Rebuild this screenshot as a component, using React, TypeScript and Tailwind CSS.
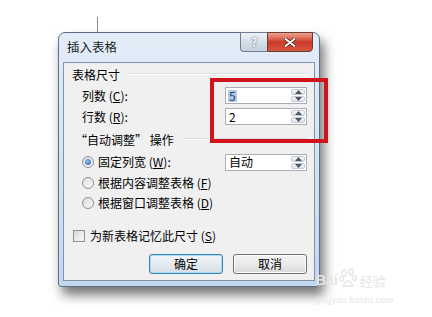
import React from "react";

const Spin = ({ value, sel }: { value: string; sel?: boolean }) => (
  <div className="w-[82px] h-[17px] border border-[#a9aeb6] bg-white flex items-stretch">
    <div className="flex-1 flex items-center pl-[2px] text-[12px] leading-none text-black">
      <span className={sel ? "bg-[#b3cde9] px-[1px] text-[#1b3f6a]" : "px-[1px]"}>{value}</span>
    </div>
    <div className="w-[15px] flex flex-col py-[1px] pr-[1px] gap-px">
      <div className="flex-1 border border-[#c5cbd3] bg-gradient-to-b from-[#f6f7f9] to-[#dfe3e8] rounded-[2px] flex items-center justify-center">
        <svg width="7" height="4" viewBox="0 0 7 4"><path d="M0 4 L3.5 0 L7 4 Z" fill="#4a5868" /></svg>
      </div>
      <div className="flex-1 border border-[#c5cbd3] bg-gradient-to-b from-[#f6f7f9] to-[#dfe3e8] rounded-[2px] flex items-center justify-center">
        <svg width="7" height="4" viewBox="0 0 7 4"><path d="M0 0 L3.5 4 L7 0 Z" fill="#4a5868" /></svg>
      </div>
    </div>
  </div>
);

const Radio = ({ on }: { on?: boolean }) => (
  <div className="w-[12px] h-[12px] rounded-full border border-[#8e9194] bg-gradient-to-br from-[#dcdcdc] to-[#fbfbfb] flex items-center justify-center shrink-0">
    {on && <div className="w-[6px] h-[6px] rounded-full bg-[radial-gradient(circle_at_40%_35%,#8cc0ef,#1d5fa5)]" />}
  </div>
);

const U = ({ c }: { c: string }) => (
  <span>
    (<span className="underline">{c}</span>)
  </span>
);

export default function App() {
  return (
    <div className="relative w-[432px] h-[317px] bg-white overflow-hidden font-['Noto_Sans_CJK_SC','Noto_Sans',sans-serif] text-black">
      {/* vertical guide line */}
      <div className="absolute left-[97px] top-[17px] w-px h-[16px] bg-[#8a8a8a]" />

      {/* dialog window */}
      <div className="absolute left-[58px] top-[32px] w-[262px] h-[255px] border border-[#5d6f86] rounded-t-[7px] rounded-b-[3px] bg-gradient-to-b from-[#e3edf8] via-[#d3e3f3] to-[#c3d8ee] shadow-[4px_8px_12px_rgba(0,0,0,0.55)] flex flex-col">
        {/* title bar */}
        <div className="h-[29px] flex items-start">
          <div className="self-center pl-[8px] text-[12.5px] leading-none text-[#1e1e1e]">插入表格</div>
          <div className="ml-auto mr-[6px] -mt-px flex h-[20px]">
            <div className="w-[27px] h-full border border-[#6e7f93] border-r-0 rounded-bl-[4px] bg-gradient-to-b from-[#eef2f7] via-[#d6e0ea] to-[#c3d0de] flex items-center justify-center text-[12px] font-bold text-[#f6f8fb] [text-shadow:0_0_2px_#3e4b5a]">
              ?
            </div>
            <div className="w-[46px] h-full border border-[#6b3b36] rounded-br-[4px] bg-gradient-to-b from-[#eba292] via-[#cc3a28] to-[#d9553d] flex items-center justify-center">
              <svg width="12" height="9" viewBox="0 0 12 9">
                <path d="M1.5 1 L10.5 8 M10.5 1 L1.5 8" stroke="#3d1a16" strokeWidth="3.2" strokeLinecap="round" />
                <path d="M1.5 1 L10.5 8 M10.5 1 L1.5 8" stroke="#ffffff" strokeWidth="2" strokeLinecap="round" />
              </svg>
            </div>
          </div>
        </div>

        {/* client area */}
        <div className="mx-[4px] mb-[5px] flex-1 border border-[#7f93ab] bg-[#f0f0f0] flex flex-col text-[12px] leading-none pr-[7px]">
          {/* 表格尺寸 */}
          <div className="mt-[4px] h-[16px] flex items-center pl-[8px]">
            <span>表格尺寸</span>
            <div className="flex-1 ml-[6px] mt-[-2px] h-[2px] border-t border-[#d5dfe5] border-b border-b-white" />
          </div>
          <div className="mt-[4px] h-[17px] flex items-center pl-[18px]">
            <span className="w-[143px]">列数 <U c="C" />:</span>
            <Spin value="5" sel />
          </div>
          <div className="mt-[4px] h-[17px] flex items-center pl-[18px]">
            <span className="w-[143px]">行数 <U c="R" />:</span>
            <Spin value="2" />
          </div>
          {/* 自动调整 */}
          <div className="mt-[7px] h-[16px] flex items-center pl-[11px]">
            <span>“自动调整” 操作</span>
            <div className="flex-1 ml-[8px] mt-[-2px] h-[2px] border-t border-[#d5dfe5] border-b border-b-white" />
          </div>
          <div className="mt-[6px] h-[16px] flex items-center pl-[18px]">
            <Radio on />
            <span className="ml-[4px] w-[127px]">固定列宽 <U c="W" />:</span>
            <Spin value="自动" />
          </div>
          <div className="mt-[5px] h-[16px] flex items-center pl-[18px]">
            <Radio />
            <span className="ml-[4px]">根据内容调整表格 <U c="F" /></span>
          </div>
          <div className="mt-[4px] h-[16px] flex items-center pl-[18px]">
            <Radio />
            <span className="ml-[4px]">根据窗口调整表格 <U c="D" /></span>
          </div>
          {/* checkbox */}
          <div className="mt-[17px] h-[16px] flex items-center pl-[9px]">
            <div className="w-[12px] h-[12px] border border-[#8e9194] bg-gradient-to-br from-[#d9d9d9] to-[#fafafa] shrink-0" />
            <span className="ml-[5px]">为新表格记忆此尺寸 <U c="S" /></span>
          </div>
          {/* buttons */}
          <div className="mt-[10px] h-[20px] flex justify-end gap-[10px]">
            <div className="w-[74px] h-full rounded-[3px] border border-[#3c7fb1] shadow-[inset_0_0_0_1px_#a8dcf5] bg-gradient-to-b from-[#f1f5f8] via-[#e6ecf1] to-[#d6dfe6] flex items-center justify-center">
              确定
            </div>
            <div className="w-[74px] h-full rounded-[3px] border border-[#707070] shadow-[inset_0_0_0_1px_#fbfbfb] bg-gradient-to-b from-[#f3f3f3] via-[#ebebeb] to-[#d8d8d8] flex items-center justify-center">
              取消
            </div>
          </div>
        </div>
      </div>

      {/* red annotation box */}
      <div className="absolute left-[210px] top-[78px] w-[118px] h-[65px] border-[4px] border-[#d0141c]" />

      {/* watermark */}
      <div className="absolute left-[316px] top-[262px] w-[92px] flex flex-col items-start text-[#e6e6e6]">
        <div className="flex items-end h-[26px]">
          <span className="text-[14px] font-bold leading-none font-['Liberation_Sans',sans-serif] mb-[1px]">Bai</span>
          <svg width="18" height="20" viewBox="0 0 18 20" className="mx-[1px]">
            <g fill="none" stroke="#e6e6e6" strokeWidth="1.4">
              <ellipse cx="5" cy="5" rx="2.2" ry="3" />
              <ellipse cx="12" cy="4" rx="2.2" ry="3" />
              <ellipse cx="2.5" cy="11" rx="1.8" ry="2.4" />
              <ellipse cx="15.5" cy="10" rx="1.8" ry="2.4" />
              <path d="M4 18 Q9 8 14 18 Z" />
            </g>
          </svg>
          <span className="text-[13px] leading-none mb-[1px] ml-[2px]">经验</span>
        </div>
        <div className="text-[9px] leading-none mt-[8px] font-['Liberation_Sans',sans-serif] tracking-[0.3px]">jingyan.baidu.com</div>
      </div>
    </div>
  );
}
